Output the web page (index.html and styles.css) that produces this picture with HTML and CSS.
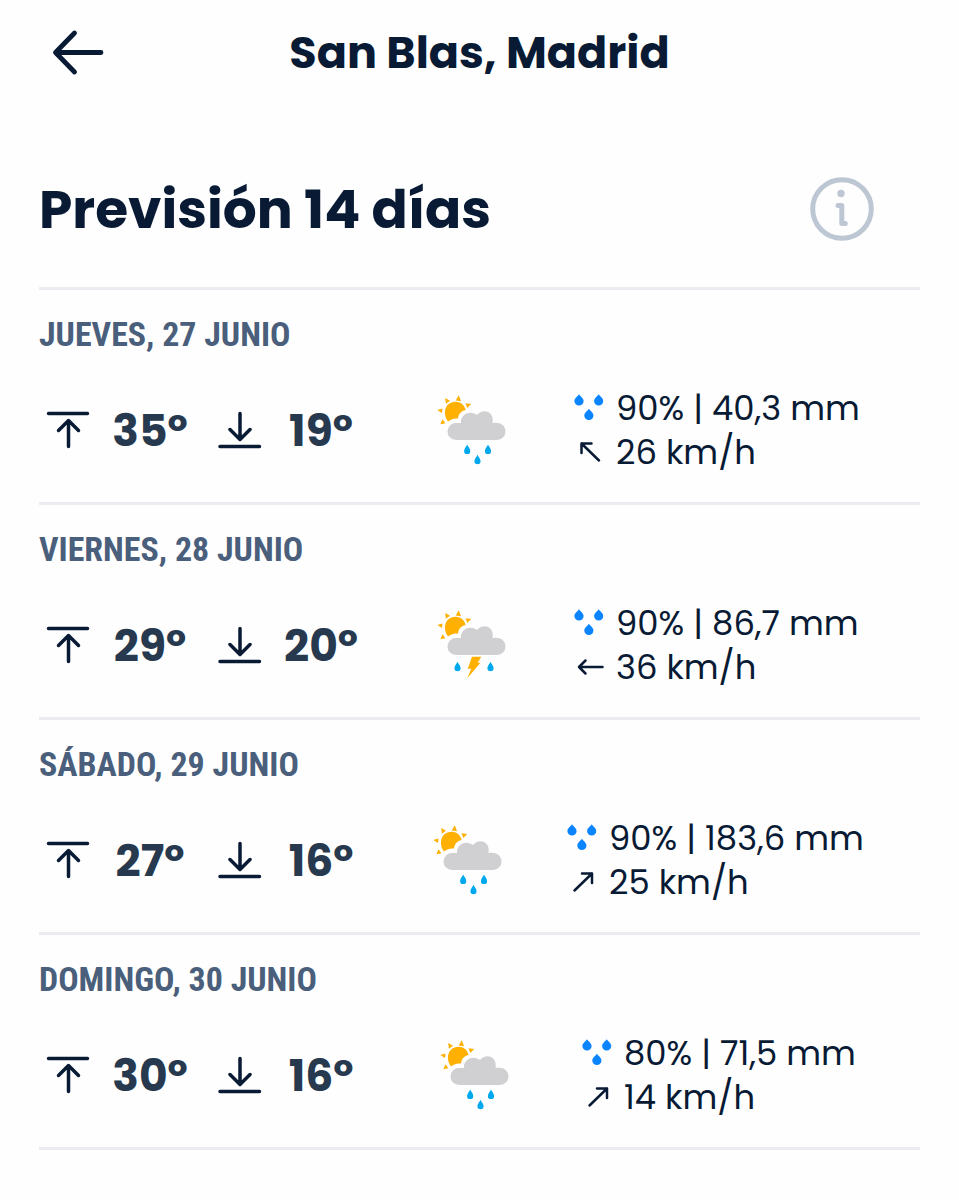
FILE: index.html
```html
<!DOCTYPE html>
<html lang="es">
<head>
<meta charset="utf-8">
<title>Previsión 14 días</title>
<link rel="stylesheet" href="styles.css">
</head>
<body>
<svg class="defs" aria-hidden="true">
  <symbol id="max" viewBox="0 0 44 38"><path d="M2.500 2.500H41.500M22.500 35.500V9.500M12.500 19.500L22.500 9.500L32.500 19.500"/></symbol>
  <symbol id="min" viewBox="0 0 44 38"><path d="M2 35.500H41.500M22 2.500V28.500M12 18.500L22 28.500L32 18.500"/></symbol>
  <symbol id="drop" viewBox="0 0 10 12"><path d="M5 .3C6.200 2.500 9.600 4.100 9.600 7.100A4.600 4.500 0 0 1 .4 7.100C.4 4.100 3.800 2.500 5 .3Z"/></symbol>
  <symbol id="drops" viewBox="0 0 30 28">
    <use href="#drop" x="0" y="0" width="10" height="12"/><use href="#drop" x="19.700" y="0" width="10" height="12"/><use href="#drop" x="9.900" y="14.500" width="10" height="12"/>
  </symbol>
  <symbol id="cloud" viewBox="16 14 72 72">
    <path fill="#ffb000" d="M28 41.500C23 35 24 25 31.500 22.500C38 20 44.500 24 45.600 30C41 31 38.500 34 38 38.500C34.500 38.500 31 39 28 41.500ZM25.200 18.100L30 20.800L25.900 23.700ZM38.800 15.200L41 21.200L35.700 20.400ZM51.200 24.100L47.300 28.100L45.500 23.300ZM17.300 30.100L22.500 28.400L22 33ZM20.400 44.200L22.500 39.200L25.400 43.200Z"/>
    <path fill="#d0d0d2" d="M36 60A8.500 8.500 0 0 1 36 43C38.500 43 40 43 41 42.700C40.500 37 45 32.500 50.500 32.700C53 32.700 55.500 33.800 57 35C59.500 31.500 64 30.300 67.500 31.700C71.800 33.300 73.500 38 72.500 43.200C79 41.500 85.500 45 85.500 51.500A8.500 8.500 0 0 1 77 60Z"/>
  </symbol>
  <symbol id="raindrop" viewBox="0 0 7 10"><path fill="#00a9ee" d="M3.500 0C4.200 2.300 6.600 3.900 6.600 6.400A3.100 3.200 0 0 1 .4 6.400C.4 3.900 2.800 2.300 3.500 0Z"/></symbol>
  <symbol id="rain" viewBox="16 14 72 72">
    <use href="#cloud" x="16" y="14" width="72" height="72"/>
    <use href="#raindrop" x="43.700" y="64.500" width="7" height="10"/><use href="#raindrop" x="64.500" y="64.500" width="7" height="10"/><use href="#raindrop" x="54" y="74.700" width="7" height="10"/>
  </symbol>
  <symbol id="storm" viewBox="16 14 72 72">
    <use href="#cloud" x="16" y="14" width="72" height="72"/>
    <use href="#raindrop" x="34" y="66.700" width="7" height="10"/><use href="#raindrop" x="67" y="66.700" width="7" height="10"/>
    <path fill="#ffb000" d="M52 61.700H61.300L57.700 67.800H60.500L47.300 83.300L51.300 73.700H47.700Z"/>
  </symbol>
  <symbol id="nw" viewBox="0 0 30 26"><path d="M24 21.500L6.500 4.500M16.500 4.500H6.500V14"/></symbol>
  <symbol id="west" viewBox="0 0 30 26"><path d="M27.500 13H4M10.500 6.500L4 13L10.500 19.500"/></symbol>
  <symbol id="ne" viewBox="0 0 30 26"><path d="M6.500 21.500L24 4.500M14 4.500H24V14"/></symbol>
</svg>

<header class="topbar">
  <svg class="back" viewBox="0 0 54 48"><path d="M50 24.500H5M23.500 5L4.500 24.500L23.500 44"/></svg>
  <h1 class="place">San Blas, Madrid</h1>
</header>

<main class="forecast">
  <div class="heading">
    <h2 class="heading-text">Previsión 14 días</h2>
    <svg class="info" viewBox="0 0 64 64"><circle cx="32" cy="32" r="29.300"/><path d="M28 28.500H31.800V46.500M31.800 46.500H35.300"/><circle class="dot" cx="31" cy="16.500" r="3.700"/></svg>
  </div>

  <section class="day">
    <h3 class="date">JUEVES, 27 JUNIO</h3>
    <div class="data">
      <svg class="limit"><use href="#max"/></svg><span class="temp">35º</span>
      <svg class="limit low"><use href="#min"/></svg><span class="temp">19º</span>
      <svg class="sky"><use href="#rain"/></svg>
      <div class="details">
        <svg class="drops"><use href="#drops"/></svg><span class="rainfall">90% | 40,3 mm</span>
        <svg class="wind"><use href="#nw"/></svg><span class="speed">26 km/h</span>
      </div>
    </div>
  </section>

  <section class="day">
    <h3 class="date">VIERNES, 28 JUNIO</h3>
    <div class="data">
      <svg class="limit"><use href="#max"/></svg><span class="temp">29º</span>
      <svg class="limit low"><use href="#min"/></svg><span class="temp">20º</span>
      <svg class="sky"><use href="#storm"/></svg>
      <div class="details">
        <svg class="drops"><use href="#drops"/></svg><span class="rainfall">90% | 86,7 mm</span>
        <svg class="wind"><use href="#west"/></svg><span class="speed">36 km/h</span>
      </div>
    </div>
  </section>

  <section class="day wide">
    <h3 class="date">SÁBADO, 29 JUNIO</h3>
    <div class="data">
      <svg class="limit"><use href="#max"/></svg><span class="temp">27º</span>
      <svg class="limit low"><use href="#min"/></svg><span class="temp">16º</span>
      <svg class="sky"><use href="#rain"/></svg>
      <div class="details">
        <svg class="drops"><use href="#drops"/></svg><span class="rainfall">90% | 183,6 mm</span>
        <svg class="wind"><use href="#ne"/></svg><span class="speed">25 km/h</span>
      </div>
    </div>
  </section>

  <section class="day narrow">
    <h3 class="date">DOMINGO, 30 JUNIO</h3>
    <div class="data">
      <svg class="limit"><use href="#max"/></svg><span class="temp">30º</span>
      <svg class="limit low"><use href="#min"/></svg><span class="temp">16º</span>
      <svg class="sky"><use href="#rain"/></svg>
      <div class="details">
        <svg class="drops"><use href="#drops"/></svg><span class="rainfall">80% | 71,5 mm</span>
        <svg class="wind"><use href="#ne"/></svg><span class="speed">14 km/h</span>
      </div>
    </div>
  </section>
</main>
</body>
</html>
```
FILE: styles.css
```css
* { box-sizing: border-box; }
body { margin: 0; background: #fefefe; color: #081a34; font-family: Poppins, Inter, "Open Sans", sans-serif; }
h1, h2, h3 { margin: 0; white-space: nowrap; }
svg { display: block; flex: none; fill: none; stroke-linecap: round; stroke-linejoin: round; }
.defs { width: 0; height: 0; position: absolute; }

.topbar { display: grid; grid-template-columns: 110px 1fr 110px; align-items: center; height: 104px; }
.back { width: 54px; height: 48px; margin-left: 51px; stroke: #081a34; stroke-width: 4.800; }
.place { padding-top: 2px; font-size: 44.500px; line-height: 56px; font-weight: 700; text-align: center; }

.forecast { padding: 0 39px; }
.heading { display: flex; align-items: center; justify-content: space-between; height: 186px; padding: 27px 46px 0 0; border-bottom: 3px solid #ebecef; }
.heading-text { font-size: 53.400px; line-height: 64px; font-weight: 700; padding-top: 2px; }
.info { width: 64px; height: 64px; stroke: #bdc7d3; stroke-width: 5; }
.info .dot { fill: #bdc7d3; stroke: none; }

.day { height: 215px; padding-top: 22px; border-bottom: 3px solid #ebecef; --shift: 0px; }
.wide { --shift: -4px; }
.narrow { --shift: 3px; }
.date { font-family: "Roboto Condensed", Roboto, sans-serif; font-stretch: 75%; font-size: 33.900px; line-height: 46px; font-weight: 700; color: #4a5f7b; }
.data { display: flex; align-items: center; height: 88px; margin-top: 28px; padding-left: 7px; }
.limit { width: 44px; height: 38px; stroke: #081a34; stroke-width: 3.500; }
.temp { width: 118px; margin-left: 1px; padding-top: 1px; text-align: center; font-size: 44px; line-height: 56px; font-weight: 700; color: #27394e; }
.low { margin-left: 9px; }
.low + .temp { margin-left: 0; }
.sky { width: 72px; height: 72px; margin-left: calc(56px + var(--shift)); }
.details { display: grid; grid-template-columns: 42px auto; grid-auto-rows: 44px; align-items: center; margin-left: 66px; font-size: 33.800px; line-height: 43px; white-space: nowrap; }
.wide .details { margin-left: 63px; }
.narrow .details { margin-left: 71px; }
.drops { width: 30px; height: 28px; fill: #0b84ff; }
.wind { width: 30px; height: 26px; margin-left: 1px; stroke: #081a34; stroke-width: 2.500; }
```
